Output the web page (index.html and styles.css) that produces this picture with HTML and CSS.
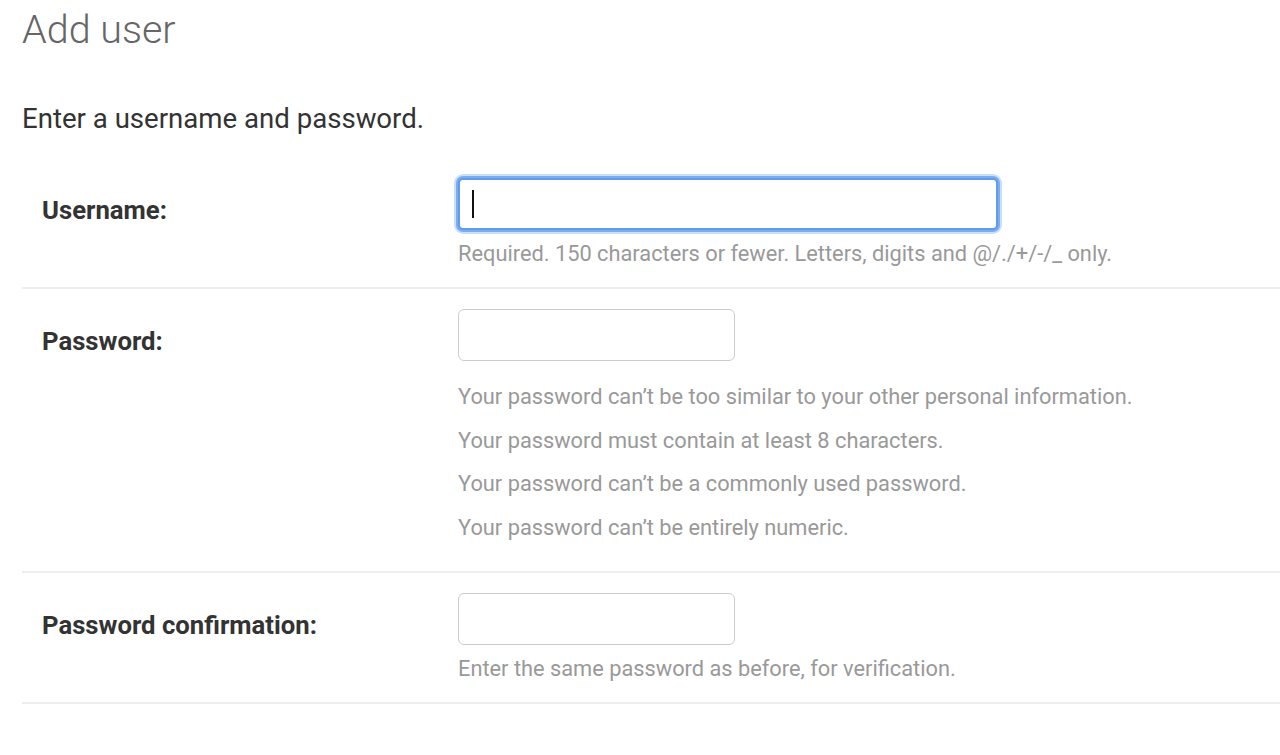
FILE: index.html
```html
<!DOCTYPE html>
<html lang="en">
<head>
    <meta charset="UTF-8">
    <meta name="viewport" content="width=device-width, initial-scale=1.0">
    <title>Add user</title>
    <link rel="stylesheet" href="styles.css">
</head>
<body>
    <div class="content">
        <h1>Add user</h1>
        <p class="intro">Enter a username and password.</p>

        <form class="user-form">
            <div class="form-row">
                <label for="id_username">Username:</label>
                <div class="field">
                    <div class="input-wrap">
                        <input id="id_username" type="text" class="wide focused">
                        <span class="caret"></span>
                    </div>
                    <div class="help">Required. 150 characters or fewer. Letters, digits and @/./+/-/_ only.</div>
                </div>
            </div>

            <div class="form-row">
                <label for="id_password1">Password:</label>
                <div class="field">
                    <input id="id_password1" type="password">
                    <ul class="help help-list">
                        <li>Your password can’t be too similar to your other personal information.</li>
                        <li>Your password must contain at least 8 characters.</li>
                        <li>Your password can’t be a commonly used password.</li>
                        <li>Your password can’t be entirely numeric.</li>
                    </ul>
                </div>
            </div>

            <div class="form-row">
                <label for="id_password2">Password confirmation:</label>
                <div class="field">
                    <input id="id_password2" type="password">
                    <div class="help">Enter the same password as before, for verification.</div>
                </div>
            </div>
        </form>
    </div>
</body>
</html>
```

FILE: styles.css
```css
body {
    margin: 0;
    font-family: Roboto, "Liberation Sans", sans-serif;
    background: #fff;
    color: #333;
}
.content {
    padding: 0 0 0 22px;
}
h1 {
    margin: 0;
    padding-top: 4px;
    font-size: 39.5px;
    font-weight: 300;
    line-height: 52px;
    color: #666;
}
.intro {
    margin: 46px 0 42px;
    font-size: 27.6px;
    line-height: 34px;
}
.form-row {
    display: flex;
    padding: 20px 0 20px 20px;
    border-bottom: 2px solid #eee;
}
.form-row:first-child {
    padding-top: 0;
}
.form-row label {
    width: 416px;
    flex-shrink: 0;
    font-size: 25.7px;
    font-weight: bold;
    line-height: 52px;
    color: #333;
    padding-top: 6px;
}
.input-wrap {
    position: relative;
}
.caret {
    position: absolute;
    left: 14px;
    top: 12px;
    width: 2px;
    height: 28px;
    background: #111;
}
.field input {
    display: block;
    box-sizing: border-box;
    width: 277px;
    height: 52px;
    margin: 0;
    border: 1.5px solid #ccc;
    border-radius: 6px;
    background: #fff;
    outline: none;
}
.field input.wide {
    width: 540px;
}
.field input.focused {
    border: 2px solid #5f9cec;
    border-radius: 5px;
    box-shadow: 0 0 0 2px rgba(95, 156, 236, 0.75), 0 0 0 4px rgba(140, 185, 245, 0.45);
    caret-color: transparent;
}
.help {
    margin: 11px 0 0;
    font-size: 21.8px;
    line-height: 26px;
    color: #999;
}
.help-list {
    margin-top: 23px;
    margin-bottom: 10px;
    padding: 0;
    list-style: none;
}
.help-list li + li {
    margin-top: 17.5px;
}
```
